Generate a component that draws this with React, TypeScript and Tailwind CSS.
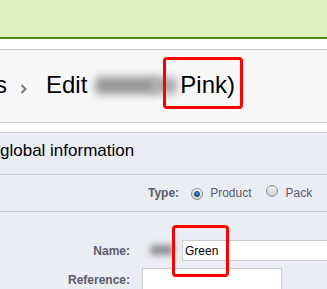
import React from "react";

function Radio({ checked }: { checked?: boolean }) {
  return (
    <span className="relative inline-flex h-[12px] w-[12px] shrink-0 items-center justify-center rounded-full border border-[#8e8e8e] bg-gradient-to-b from-[#f4f4f4] to-[#cfcfcf]">
      {checked && (
        <span className="h-[6px] w-[6px] rounded-full border border-[#0d3f73] bg-gradient-to-b from-[#5aa0e0] to-[#1a5a9c]" />
      )}
    </span>
  );
}

export default function App() {
  return (
    <div
      className="relative h-[289px] w-[327px] overflow-hidden bg-white"
      style={{ fontFamily: '"Liberation Sans", Arial, sans-serif' }}
    >
      <div className="h-[39px] border-b-2 border-[#4f8a10] bg-[#dff0c0]" />
      <div className="h-[10px]" />
      <div className="h-[74px] border-y border-[#cccccc] bg-[#f8f8f8] pt-[21px]">
        <div className="flex items-baseline whitespace-nowrap text-[24px] leading-[28px] text-black">
          <span className="ml-[-5px]">s</span>
          <svg
            className="ml-[13px] self-center"
            width="7"
            height="10"
            viewBox="0 0 7 10"
            style={{ marginTop: "8px" }}
          >
            <path d="M1.5 1 L5.5 5 L1.5 9" fill="none" stroke="#7a7a7a" strokeWidth="2" />
          </svg>
          <span className="ml-[19px]">Edit</span>
          <span className="relative ml-[6px] inline-block h-[28px] w-[84px] self-center">
            <span className="absolute left-[2px] top-[6px] h-[17px] w-[62px] rounded bg-[#959595] blur-[4px]" />
            <span className="absolute left-[58px] top-[6px] h-[17px] w-[26px] rounded bg-[#aaaaaa] blur-[4px]" />
          </span>
          <span className="relative ml-[3px]">
            Pink)
            <span className="absolute left-[-17px] top-[-14px] h-[52px] w-[80px] rounded-[4px] border-[3px] border-[#ff0000]" />
          </span>
        </div>
      </div>
      <div className="h-[9px]" />
      <div className="border-t border-[#ccced7] bg-[#ebedf4]">
        <div className="h-[42px] border-b border-[#ccced7] pt-[8px] text-[17px] leading-[20px] text-black">
          global information
        </div>
        <div className="flex h-[37px] items-center border-b border-[#ccced7] pl-[148px] text-[12px] text-[#585a69]">
          <span className="font-bold">Type:</span>
          <span className="ml-[12px]">
            <Radio checked />
          </span>
          <span className="ml-[7px]">Product</span>
          <span className="ml-[15px]">
            <Radio />
          </span>
          <span className="ml-[7px]">Pack</span>
        </div>
        <div className="h-[100px] pt-[28px] text-[12px]">
          <div className="flex h-[21px] items-center">
            <span className="w-[130px] shrink-0 text-right font-bold text-[#585a69]">Name:</span>
            <span className="relative ml-[52px] h-[21px] w-[200px] shrink-0">
              <span className="absolute left-[-32px] top-[5px] h-[10px] w-[24px] rounded bg-[#8f8f8f] blur-[3px]" />
              <span className="flex h-[21px] w-full items-center border border-[#cccccc] bg-white pl-[2px] text-black">
                Green
              </span>
              <span className="absolute left-[-10px] top-[-15px] h-[52px] w-[57px] rounded-[4px] border-[3px] border-[#ff0000]" />
            </span>
          </div>
          <div className="mt-[7px] flex items-start">
            <span className="w-[130px] shrink-0 pt-[3px] text-right font-bold text-[#585a69]">Reference:</span>
            <span className="ml-[12px] h-[24px] w-[140px] border border-[#cccccc] bg-white" />
          </div>
        </div>
      </div>
    </div>
  );
}
